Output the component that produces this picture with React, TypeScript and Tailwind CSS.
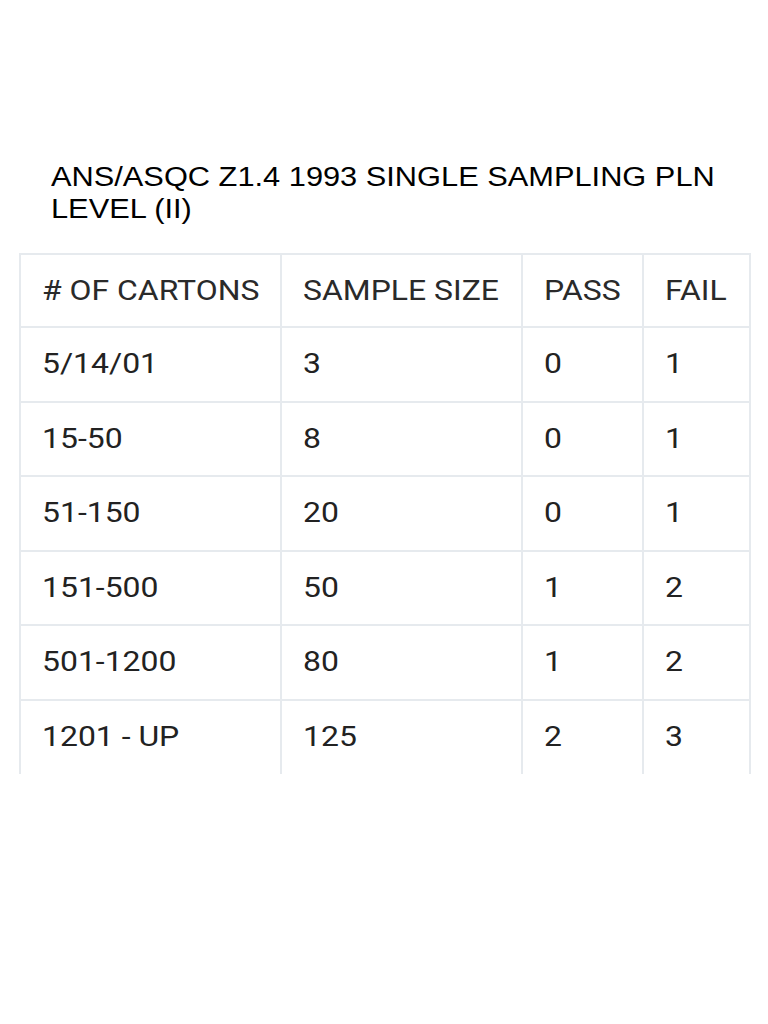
const rows = [
  ['5/14/01', '3', '0', '1'],
  ['15-50', '8', '0', '1'],
  ['51-150', '20', '0', '1'],
  ['151-500', '50', '1', '2'],
  ['501-1200', '80', '1', '2'],
  ['1201 - UP', '125', '2', '3'],
]

const headers = ['# OF CARTONS', 'SAMPLE SIZE', 'PASS', 'FAIL']
const widths = ['w-[262px]', 'w-[241px]', 'w-[122px]', 'w-[107px]']

// the source picture is stretched a bit wide, so text gets a horizontal scale
function Wide({ children }: { children: React.ReactNode }) {
  return <span className="inline-block origin-left scale-x-[1.14] whitespace-nowrap">{children}</span>
}

export default function App() {
  return (
    <div className="min-h-[1024px] bg-white pt-[161px] pl-[19px]">
      {/* title */}
      <h1 className="pl-[32px] text-[27px] leading-[32px] text-black font-['Liberation_Sans',Arial,sans-serif]">
        <Wide>ANS/ASQC Z1.4 1993 SINGLE SAMPLING PLN</Wide>
        <br />
        <Wide>LEVEL (II)</Wide>
      </h1>

      {/* sampling table */}
      <table className="mt-[28px] w-[732px] border-collapse text-[28px] text-[#222] font-['Roboto',sans-serif]">
        <thead>
          <tr className="h-[73px]">
            {headers.map((h, i) => (
              <th
                key={h}
                className={`${widths[i]} border-2 border-[#e6eaee] pl-[21px] text-left font-normal text-[#2a2a2a]`}
              >
                <Wide>{h}</Wide>
              </th>
            ))}
          </tr>
        </thead>
        <tbody>
          {rows.map((row, r) => (
            <tr key={r} className="h-[74.5px]">
              {row.map((cell, i) => (
                <td
                  key={i}
                  className={`border-x-2 border-t-2 border-[#e6eaee] pl-[21px] ${r === rows.length - 1 ? 'border-b-0' : 'border-b-2'}`}
                >
                  <Wide>{cell}</Wide>
                </td>
              ))}
            </tr>
          ))}
        </tbody>
      </table>
    </div>
  )
}
